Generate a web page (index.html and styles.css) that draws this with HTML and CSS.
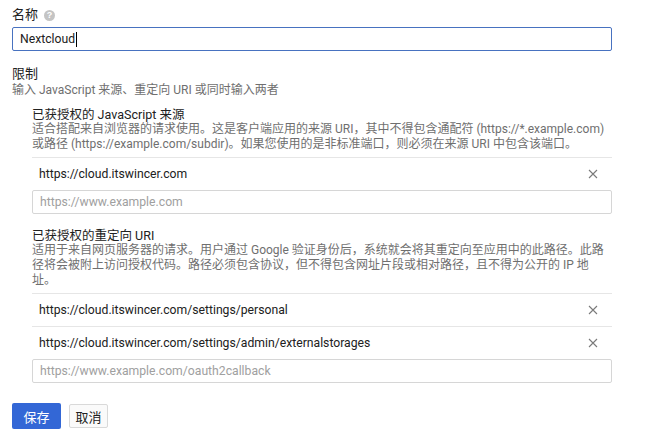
FILE: index.html
```html
<!DOCTYPE html>
<html lang="zh-CN">
<head>
<meta charset="utf-8">
<title>OAuth 客户端</title>
<link rel="stylesheet" href="styles.css">
</head>
<body>
<div class="page">
  <div class="label name-label">名称 <span class="help">?</span></div>
  <div class="input focused"><span class="value">Nextcloud</span><span class="caret"></span></div>

  <div class="label restrict-label">限制</div>
  <div class="hint">输入 JavaScript 来源、重定向 URI 或同时输入两者</div>

  <div class="section first">
    <div class="title">已获授权的 JavaScript 来源</div>
    <div class="desc">适合搭配来自浏览器的请求使用。这是客户端应用的来源 URI，其中不得包含通配符 (https://*.example.com) 或路径 (https://example.com/subdir)。如果您使用的是非标准端口，则必须在来源 URI 中包含该端口。</div>
    <div class="row">
      <span class="uri">https://cloud.itswincer.com</span>
      <svg class="close" viewBox="0 0 10 10" width="10" height="10"><path d="M1 1L9 9M9 1L1 9"/></svg>
    </div>
    <div class="input"><span class="placeholder">https://www.example.com</span></div>
  </div>

  <div class="section second">
    <div class="title">已获授权的重定向 URI</div>
    <div class="desc">适用于来自网页服务器的请求。用户通过 Google 验证身份后，系统就会将其重定向至应用中的此路径。此路径将会被附上访问授权代码。路径必须包含协议，但不得包含网址片段或相对路径，且不得为公开的 IP 地址。</div>
    <div class="row">
      <span class="uri">https://cloud.itswincer.com/settings/personal</span>
      <svg class="close" viewBox="0 0 10 10" width="10" height="10"><path d="M1 1L9 9M9 1L1 9"/></svg>
    </div>
    <div class="row">
      <span class="uri">https://cloud.itswincer.com/settings/admin/externalstorages</span>
      <svg class="close" viewBox="0 0 10 10" width="10" height="10"><path d="M1 1L9 9M9 1L1 9"/></svg>
    </div>
    <div class="input"><span class="placeholder">https://www.example.com/oauth2callback</span></div>
  </div>

  <div class="actions">
    <button class="btn primary">保存</button>
    <button class="btn secondary">取消</button>
  </div>
</div>
</body>
</html>
```
FILE: styles.css
```css
* { box-sizing: border-box; }
html, body { margin: 0; padding: 0; background: #fff; }
body {
  font-family: Roboto, "Noto Sans CJK SC", "Noto Sans", sans-serif;
  color: #212121;
  font-size: 13px;
}
.page {
  padding: 7px 0 0 12px;
  width: 612px;
}
.label {
  font-size: 13px;
  line-height: 16px;
  color: #212121;
  display: flex;
  align-items: center;
  gap: 6px;
}
.help {
  width: 11px;
  height: 11px;
  border-radius: 50%;
  background: #c4c4c4;
  color: #fff;
  font-size: 9px;
  font-weight: bold;
  line-height: 11px;
  text-align: center;
  font-family: "Liberation Sans", Arial, sans-serif;
}
.input {
  margin-top: 4px;
  height: 24px;
  border: 1px solid #d6d6d6;
  border-radius: 2px;
  padding: 0 7px;
  display: flex;
  align-items: center;
  font-size: 12.2px;
  line-height: 22px;
}
.input.focused {
  border-color: #4872c0;
  color: #212121;
}
.caret {
  display: inline-block;
  width: 1px;
  height: 15px;
  background: #000;
  margin-left: 1px;
}
.placeholder { color: #a0a0a0; }
.restrict-label { margin-top: 15px; }
.hint {
  font-size: 12px;
  line-height: 16px;
  color: #6f6f6f;
}
.section {
  margin-left: 20px;
}
.section.first { margin-top: 10px; }
.section.second { margin-top: 15px; }
.title {
  font-size: 12.5px;
  line-height: 14px;
  color: #212121;
}
.desc {
  font-size: 12px;
  line-height: 15px;
  color: #6f6f6f;
  padding-right: 4px;
  margin-bottom: 5px;
}
.row {
  border-top: 1px solid #e6e6e6;
  height: 33px;
  display: flex;
  align-items: center;
  justify-content: space-between;
  padding: 0 14px 0 7px;
  font-size: 12.2px;
  color: #212121;
}
.close {
  width: 10px;
  height: 10px;
  stroke: #7a7a7a;
  stroke-width: 1.1;
  fill: none;
}
.section .input { margin-top: 0; }
.actions {
  margin-top: 20px;
  display: flex;
  align-items: center;
  gap: 8px;
}
.btn {
  font-family: Roboto, "Noto Sans CJK SC", sans-serif;
  font-size: 13px;
  border-radius: 2px;
  cursor: pointer;
  padding: 0;
}
.btn.primary {
  width: 49px;
  height: 26px;
  background: #3367d6;
  color: #fff;
  border: none;
}
.btn.secondary {
  width: 39px;
  height: 24px;
  background: #fafafa;
  color: #212121;
  border: 1px solid #d9d9d9;
}
```
